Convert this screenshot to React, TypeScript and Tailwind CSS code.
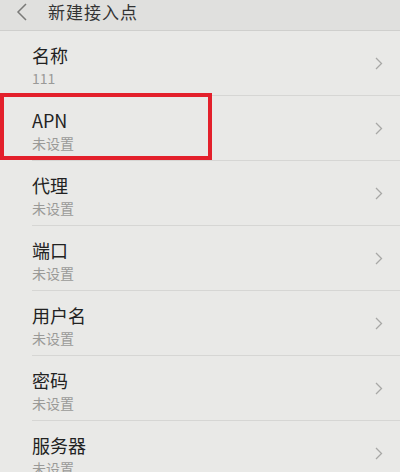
import React from "react";

const rows = [
  { title: "名称", value: "111" },
  { title: "APN", value: "未设置", marked: true },
  { title: "代理", value: "未设置" },
  { title: "端口", value: "未设置" },
  { title: "用户名", value: "未设置" },
  { title: "密码", value: "未设置" },
  { title: "服务器", value: "未设置" },
];

function Chevron() {
  return (
    <svg width="8" height="13" viewBox="0 0 8 13" className="shrink-0">
      <path d="M1 1l5.5 5.5L1 12" fill="none" stroke="#a8a8a6" strokeWidth="1.3" />
    </svg>
  );
}

export default function App() {
  return (
    <div
      className="w-[400px] h-[472px] overflow-hidden bg-[#e9e9e7]"
      style={{ fontFamily: '"Noto Sans CJK SC", "Noto Sans", sans-serif' }}
    >
      <div className="flex items-center h-[31px] bg-[#e0e0de] border-b border-[#cfcfcd] pb-[6px]">
        <svg width="12" height="18" viewBox="0 0 12 18" className="ml-[16px]">
          <path d="M10 1L2 9l8 8" fill="none" stroke="#7a7a78" strokeWidth="1.5" />
        </svg>
        <span className="ml-[20px] text-[17px] text-[#333] tracking-[1px]">新建接入点</span>
      </div>
      <div className="flex flex-col">
        {rows.map((r) => (
          <div key={r.title} className="relative h-[65px] pl-8">
            <div className="flex items-center h-full border-b border-[#d6d6d4] pr-[17px]">
              <div className="flex flex-col flex-1 self-start pt-[13px]">
                <span className="text-[18px] leading-[22px] text-[#222]">{r.title}</span>
                <span className="mt-[3px] text-[14px] leading-[18px] text-[#9a9a98]">{r.value}</span>
              </div>
              <Chevron />
            </div>
            {r.marked && (
              <div className="absolute left-0 top-[-3px] w-[212px] h-[67px] border-[4px] border-[#e3202b]" />
            )}
          </div>
        ))}
      </div>
    </div>
  );
}
